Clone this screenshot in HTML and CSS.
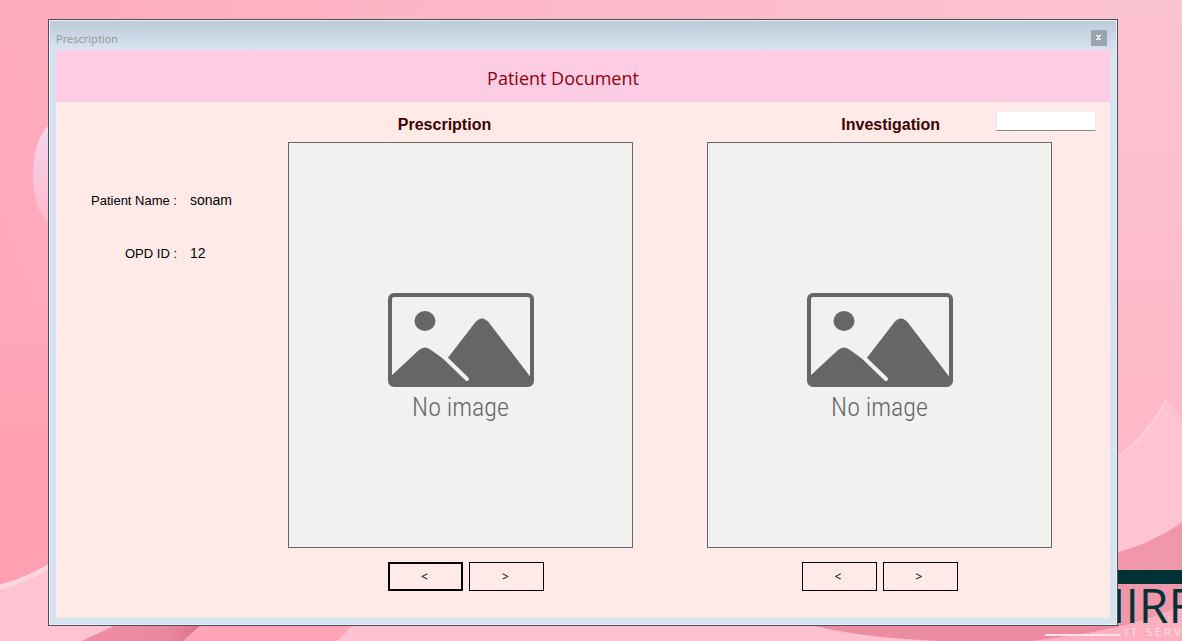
FILE: index.html
```html
<!DOCTYPE html>
<html lang="en">
<head>
<meta charset="utf-8">
<title>Prescription</title>
<link rel="stylesheet" href="styles.css">
</head>
<body>
<svg class="wallpaper" viewBox="0 0 1182 641" preserveAspectRatio="none" aria-hidden="true">
  <defs>
    <linearGradient id="sky" x1="0" y1="0.4" x2="1" y2="0.2">
      <stop offset="0" stop-color="#ffa8bb"/>
      <stop offset="0.5" stop-color="#fcb8c9"/>
      <stop offset="1" stop-color="#fcc3d1"/>
    </linearGradient>
    <linearGradient id="bubble" x1="0" y1="0" x2="0" y2="1">
      <stop offset="0" stop-color="#f4d6ec"/>
      <stop offset="1" stop-color="#ffb8ca"/>
    </linearGradient>
    <linearGradient id="side" x1="0" y1="0" x2="0" y2="1">
      <stop offset="0" stop-color="#fcc3d1"/>
      <stop offset="1" stop-color="#ffb4c4"/>
    </linearGradient>
    <linearGradient id="shade" x1="0" y1="0" x2="0" y2="1">
      <stop offset="0" stop-color="#ff9fb1" stop-opacity="0"/>
      <stop offset="0.6" stop-color="#ff9fb1"/>
      <stop offset="1" stop-color="#ff9fb1"/>
    </linearGradient>
    <linearGradient id="fold" x1="0" y1="0" x2="1" y2="0">
      <stop offset="0" stop-color="#f08da2"/>
      <stop offset="0.7" stop-color="#ec889d"/>
      <stop offset="1" stop-color="#d87389"/>
    </linearGradient>
  </defs>
  <rect width="1182" height="641" fill="url(#sky)"/>
  <path d="M0 300 H48 V566 Q30 578 0 587Z" fill="url(#shade)"/>
  <path d="M48 126 C28 145 28 205 48 223Z" fill="url(#bubble)"/>
  <path d="M0 587 Q28 580 60 560 V641 H0Z" fill="#ffc3d3"/>
  <path d="M0 587 Q28 580 60 560" fill="none" stroke="#fbd6e1" stroke-width="5"/>
  <rect y="624" width="1182" height="17" fill="#ffa5b5"/>
  <path d="M0 624 H120 L82 641 H0Z" fill="#ffc3d3"/>
  <path d="M118 624 H202 L183 641 H82Z" fill="url(#fold)"/>
  <path d="M354 624 H850 L960 641 H337Z" fill="#ffc0d0"/>
  <path d="M1116 0 H1182 V641 H1116Z" fill="url(#side)"/>
  <path d="M1110 462 Q1146 440 1166 398 Q1174 410 1182 420 V580 H1110Z" fill="#ffc3d3"/>
  <path d="M1110 462 Q1146 440 1166 400" fill="none" stroke="#ffd0dc" stroke-width="2"/>
  <path d="M1110 554 Q1150 545 1182 522 V641 H1110Z" fill="#f097ab"/>
  <path d="M806 624 H1182 V641 H940 Q860 638 806 624Z" fill="#ec8ca1"/>
  <path d="M1030 641 Q1120 632 1182 606 V641Z" fill="#ffb0c0"/>
  <rect x="1100" y="570" width="82" height="14" fill="#003236"/>
  <text x="1090" y="623" class="brand">HIRF</text>
  <path d="M1045 635 H1120" stroke="#fbe3e8" stroke-width="2"/>
  <text x="1125" y="636" class="tagline">IT SERV</text>
</svg>

<svg class="symbols" aria-hidden="true">
  <symbol id="picture" viewBox="0 0 146 94">
    <rect x="2" y="2" width="142" height="90" rx="4" fill="none" stroke="#666" stroke-width="4"/>
    <ellipse cx="37" cy="28" rx="10.500" ry="10" fill="#666"/>
    <path d="M2 84 L31 57 Q37 52 43 57 L92 92 H6 Q2 92 2 88Z" fill="#666"/>
    <path d="M59 66 L86 31 Q94 20 102 31 L144 86 V92 H86Z" fill="#666"/>
    <path d="M50 58 L79 86" fill="none" stroke="#f1f1f1" stroke-width="4" stroke-linecap="round"/>
  </symbol>
</svg>

<main class="window">
  <header class="titlebar">
    <span>Prescription</span>
    <button class="close" type="button" aria-label="Close"><svg viewBox="0 0 16 16" aria-hidden="true"><path d="M5 5h2v1h1V5h2v1H9v1H8v1h1v1h1v1H8V9H7v1H5V9h1V8h1V7H6V6H5z" fill="#fff"/></svg></button>
  </header>
  <div class="client">
    <h1>Patient Document</h1>
    <div class="content">
      <dl class="details">
        <dt>Patient Name :</dt><dd>sonam</dd>
        <dt>OPD ID :</dt><dd>12</dd>
      </dl>
      <section class="document prescription">
        <div class="caption"><h2>Prescription</h2></div>
        <figure>
          <svg class="picture" aria-hidden="true"><use href="#picture"/></svg>
          <figcaption>No image</figcaption>
        </figure>
        <div class="pager">
          <button class="default" type="button">&lt;</button>
          <button type="button">&gt;</button>
        </div>
      </section>
      <section class="document investigation">
        <div class="caption">
          <h2>Investigation</h2>
          <input type="text" aria-label="Investigation number">
        </div>
        <figure>
          <svg class="picture" aria-hidden="true"><use href="#picture"/></svg>
          <figcaption>No image</figcaption>
        </figure>
        <div class="pager">
          <button type="button">&lt;</button>
          <button type="button">&gt;</button>
        </div>
      </section>
    </div>
  </div>
</main>
</body>
</html>
```
FILE: styles.css
```css
* { box-sizing: border-box; }

body {
  margin: 0;
  min-height: 100vh;
  display: flex;
  padding: 19px 64px 15px 48px;
  font-family: "Liberation Sans", Arial, sans-serif;
  font-size: 14px;
  color: #000;
  background: #ffb4c4;
}

h1, h2, dl, dd, figure { margin: 0; }
button { padding: 0; font: inherit; color: inherit; }

.wallpaper {
  position: fixed;
  inset: 0;
  z-index: -1;
  width: 100%;
  height: 100%;
}
.symbols { position: absolute; width: 0; height: 0; }
.brand { font-family: "Open Sans", "Noto Sans", sans-serif; font-size: 48px; fill: #003236; }
.tagline { font-family: "Open Sans", "Noto Sans", sans-serif; font-size: 11px; fill: #fbe3e8; letter-spacing: 3px; }

.window {
  flex: 1;
  display: flex;
  flex-direction: column;
  border: 1px solid #4c4f53;
  padding: 0 7px 7px;
  background: linear-gradient(#bccad8, #d7e3f0 30px);
  box-shadow: inset 0 0 0 1px #e8eff7;
}

.titlebar {
  height: 30px;
  display: flex;
  align-items: center;
  justify-content: space-between;
  padding: 6px 3px 0 0;
  font-family: "Noto Sans", sans-serif;
  font-size: 11px;
  color: #999;
}
.close {
  width: 16px;
  height: 16px;
  border: 0;
  background: #99a4ad;
}
.close svg { display: block; width: 16px; height: 16px; }

.client {
  flex: 1;
  display: flex;
  flex-direction: column;
  background: #ffeae8;
}
h1 {
  padding: 16px 40px 12px 0;
  background: #ffcde3;
  color: #900010;
  font-family: "Open Sans", "Noto Sans", sans-serif;
  font-size: 18px;
  font-weight: 400;
  line-height: 24px;
  text-align: center;
}

.content {
  flex: 1;
  display: grid;
  grid-template-columns: 158px 1fr 1fr;
  column-gap: 74px;
  padding: 9px 58px 27px 0;
}

.details {
  display: grid;
  grid-template-columns: 121px auto;
  column-gap: 13px;
  row-gap: 32px;
  align-content: start;
  align-items: baseline;
  padding-top: 79px;
  line-height: 20px;
  white-space: nowrap;
}
dt { font-size: 13px; text-align: right; }

.document { display: flex; flex-direction: column; }
.caption {
  height: 31px;
  display: flex;
  align-items: flex-start;
  justify-content: center;
}
h2 {
  color: #400000;
  font-size: 16px;
  line-height: 28px;
}
.prescription .caption { padding-right: 32px; }
.investigation .caption { justify-content: flex-end; gap: 56px; margin-right: -44px; }
input {
  width: 100px;
  height: 20px;
  border: 1px solid #ececee;
  border-bottom-color: #888;
  background: #fff;
}

figure {
  flex: 1;
  display: flex;
  flex-direction: column;
  align-items: center;
  justify-content: center;
  gap: 4px;
  padding-top: 26px;
  border: 1px solid #666;
  background: #f1f1f1;
}
.picture { width: 146px; height: 94px; }
figcaption {
  color: #666;
  font-family: "Roboto Condensed", Roboto, "Liberation Sans", sans-serif;
  font-size: 26px;
  font-weight: 300;
  line-height: 32px;
}

.pager {
  display: flex;
  justify-content: center;
  gap: 6px;
  margin-top: 14px;
}
.prescription .pager { padding-left: 11px; }
.pager button {
  width: 75px;
  height: 29px;
  border: 1px solid #000;
  padding-right: 2px;
  background: transparent;
  font-family: "Noto Sans", sans-serif;
  font-size: 12px;
}
.pager .default { border-width: 2px; }
```
